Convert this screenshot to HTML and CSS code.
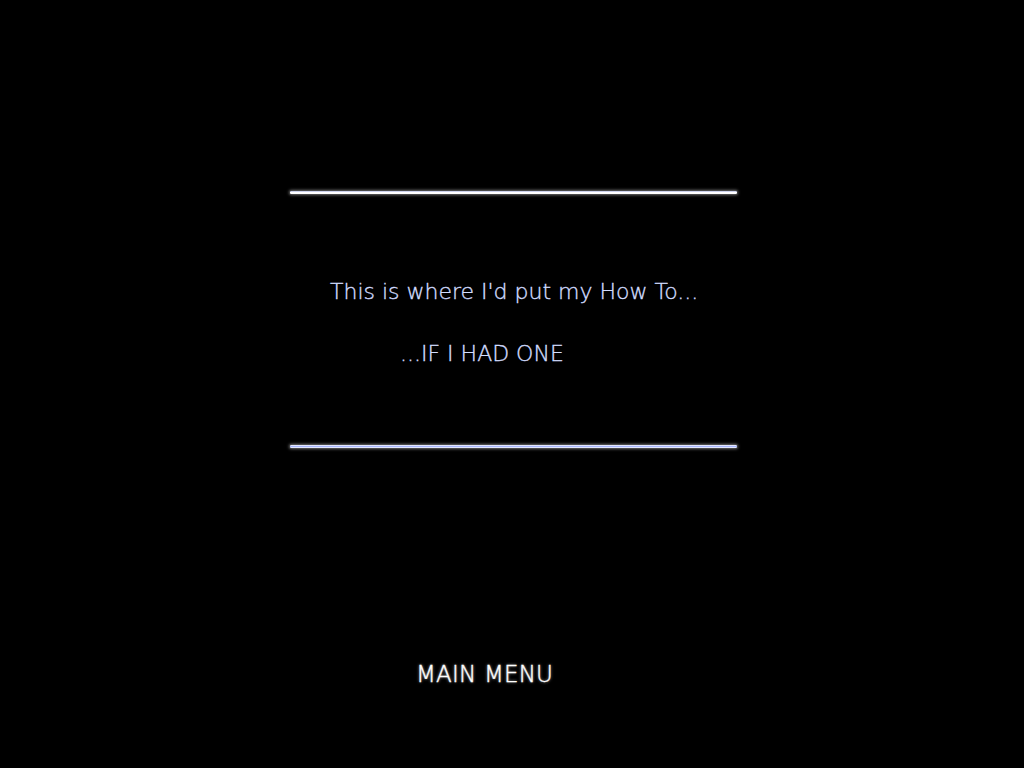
FILE: index.html
```html
<!DOCTYPE html>
<html>
<head>
<meta charset="utf-8">
<link rel="stylesheet" href="styles.css">
</head>
<body>
<div class="screen">
  <div class="panel">
    <div class="rule rule-top"></div>
    <div class="content">
      <p class="line1">This is where I'd put my How To...</p>
      <p class="line2">...IF I HAD ONE</p>
    </div>
    <div class="rule rule-bottom"></div>
  </div>
  <div class="menu">MAIN MENU</div>
</div>
</body>
</html>
```
FILE: styles.css
```css
html, body {
  margin: 0;
  padding: 0;
  background: #000;
}
.screen {
  width: 1024px;
  height: 768px;
  background: #000;
  font-family: "DejaVu Sans", "Liberation Sans", sans-serif;
  font-weight: 200;
  display: flex;
  flex-direction: column;
}
.panel {
  margin-top: 191px;
  margin-left: 290px;
  width: 447px;
  display: flex;
  flex-direction: column;
}
.rule {
  height: 3px;
  background: linear-gradient(#aab4e0, #ffffff 40%, #ffffff);
  box-shadow: 0 0 3px 1px rgba(255,255,255,0.45);
  border-radius: 1px;
}
.rule-bottom {
  background: linear-gradient(#ffffff, #aab8ff 50%, #ffffff);
}
.content {
  height: 251px;
  color: #d2ddff;
  font-size: 22px;
  -webkit-text-stroke: 0.35px #d2ddff;
}
.content p {
  margin: 0;
  line-height: 26px;
}
.line1 {
  padding-top: 85px;
  padding-left: 40px;
}
.line2 {
  padding-top: 36px;
  padding-left: 110px;
}
.menu {
  margin-top: 212px;
  margin-left: 416px;
  color: #fff;
  font-size: 23px;
  line-height: 28px;
  letter-spacing: 0.2px;
  -webkit-text-stroke: 0.35px #fff;
  text-shadow: 0 0 3px rgba(255,255,255,0.8);
}
```
